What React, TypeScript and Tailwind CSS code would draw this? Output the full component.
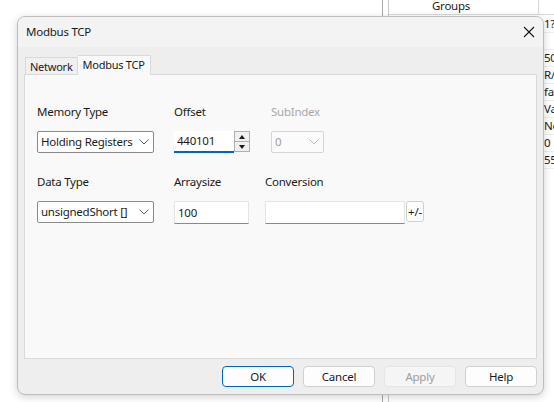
import React from "react";

const FONT = "font-['Segoe_UI','Noto_Sans','Open_Sans',sans-serif]";

function Chevron({ color = "#606060" }: { color?: string }) {
  return (
    <svg width="10" height="6" viewBox="0 0 10 6" fill="none" stroke={color} strokeWidth="1" className="shrink-0">
      <polyline points="0.5 0.5 5 5 9.5 0.5" />
    </svg>
  );
}

function Select({ value, width, disabled }: { value: string; width: string; disabled?: boolean }) {
  return (
    <div
      className={`${width} h-[22px] flex items-center justify-between pl-[3px] pr-[4px] border rounded-[2px] ${
        disabled ? "border-[#d5d5d5] bg-[#fbfbfb] text-[#a0a0a0]" : "border-[#8a8a8a] bg-white text-[#1a1a1a]"
      }`}
    >
      <span className="whitespace-nowrap">{value}</span>
      <Chevron color={disabled ? "#b8b8b8" : "#606060"} />
    </div>
  );
}

function Btn({ label, primary, disabled }: { label: string; primary?: boolean; disabled?: boolean }) {
  return (
    <div
      className={`w-[72px] h-[21px] flex items-center justify-center rounded-[4px] border ${
        primary
          ? "border-[#0067c0] bg-[#fdfdfd] text-[#1a1a1a]"
          : disabled
          ? "border-[#e5e5e5] bg-[#f5f5f5] text-[#9d9d9d]"
          : "border-[#d0d0d0] bg-[#fdfdfd] text-[#1a1a1a]"
      }`}
    >
      {label}
    </div>
  );
}

const STRIP = ["1?I", "", "50", "R/", "fal", "Va", "No", "0", "55"];

export default function App() {
  return (
    <div className={`${FONT} relative w-[554px] h-[402px] overflow-hidden bg-white text-[11.5px] tracking-[-0.25px]`}>
      {/* background window */}
      <div className="absolute left-[382px] top-0 h-full w-px bg-[#a8a8a8]" />
      <div className="absolute left-[388px] top-0 h-full w-px bg-[#c8c8c8]" />
      <div className="absolute left-[389px] top-0 right-0 h-[15px] border-b border-[#d8d8d8] flex">
        <div className="w-[150px] h-full border-r border-[#d8d8d8] pl-[43px] leading-[12px] text-[#1a1a1a]">Groups</div>
      </div>
      <div className="absolute left-[540px] top-[16px] right-0 flex flex-col text-[#1a1a1a]">
        {STRIP.map((t, i) => (
          <div key={i} className="h-[17px] leading-[16px] border-b border-[#ececec] pl-[4px] whitespace-nowrap">
            {t}
          </div>
        ))}
      </div>

      {/* dialog */}
      <div className="absolute left-[17px] top-[16px] w-[527px] h-[379px] rounded-[8px] border border-[#bdbdbd] bg-[#eeeeee] shadow-[0_2px_8px_rgba(0,0,0,0.18)] flex flex-col overflow-hidden">
        <div className="h-[30px] shrink-0 bg-[#f3f3f3] flex items-center justify-between pl-[8px] pr-[8px]">
          <span className="text-[#1a1a1a]">Modbus TCP</span>
          <svg width="12" height="12" viewBox="0 0 12 12" stroke="#1a1a1a" strokeWidth="1.1">
            <line x1="1" y1="1" x2="11" y2="11" />
            <line x1="11" y1="1" x2="1" y2="11" />
          </svg>
        </div>
        <div className="flex-1 flex flex-col px-[6px] pt-[7px]">
          {/* tabs */}
          <div className="flex items-end h-[20px] pl-[1px] text-[11px]">
            <div className="h-[17px] px-[4px] border border-b-0 border-[#d9d9d9] bg-[#f0f0f0] leading-[17px] text-[#1a1a1a]">
              Network
            </div>
            <div className="h-[20px] px-[5px] border border-b-0 border-l-0 border-[#d9d9d9] bg-[#f9f9f9] leading-[18px] text-[#1a1a1a] -mb-px relative z-10">
              Modbus TCP
            </div>
          </div>
          <div className="h-[285px] border border-[#d9d9d9] bg-[#f9f9f9] pl-[12px] pt-[30px]">
            <div className="flex">
              <div className="w-[137px] flex flex-col gap-[12px]">
                <span className="text-[#1a1a1a] leading-[14px]">Memory Type</span>
                <Select value="Holding Registers" width="w-[117px]" />
              </div>
              <div className="w-[97px] flex flex-col gap-[12px]">
                <span className="text-[#1a1a1a] leading-[14px]">Offset</span>
                <div className="flex">
                  <div className="w-[60px] h-[22px] bg-white border-b-2 border-[#0067c0] pl-[3px] leading-[20px] text-[#1a1a1a]">
                    440101
                  </div>
                  <div className="w-[16px] h-[21px] flex flex-col border border-[#b0b0b0] bg-[#f0f0f0]">
                    <div className="flex-1 flex items-center justify-center border-b border-[#b0b0b0]">
                      <svg width="6" height="4" viewBox="0 0 6 4"><polygon points="0,4 6,4 3,0" fill="#1a1a1a" /></svg>
                    </div>
                    <div className="flex-1 flex items-center justify-center">
                      <svg width="6" height="4" viewBox="0 0 6 4"><polygon points="0,0 6,0 3,4" fill="#1a1a1a" /></svg>
                    </div>
                  </div>
                </div>
              </div>
              <div className="flex flex-col gap-[12px]">
                <span className="text-[#a8a8a8] leading-[14px]">SubIndex</span>
                <Select value="0" width="w-[53px]" disabled />
              </div>
            </div>
            <div className="flex mt-[22px]">
              <div className="w-[137px] flex flex-col gap-[12px]">
                <span className="text-[#1a1a1a] leading-[14px]">Data Type</span>
                <Select value="unsignedShort []" width="w-[117px]" />
              </div>
              <div className="w-[91px] flex flex-col gap-[12px]">
                <span className="text-[#1a1a1a] leading-[14px]">Arraysize</span>
                <div className="w-[75px] h-[23px] bg-white border border-[#e5e5e5] border-b-[#8a8a8a] pl-[3px] leading-[21px] text-[#1a1a1a]">
                  100
                </div>
              </div>
              <div className="flex flex-col gap-[12px]">
                <span className="text-[#1a1a1a] leading-[14px]">Conversion</span>
                <div className="flex items-start">
                  <div className="w-[140px] h-[23px] bg-white border border-[#e5e5e5] border-b-[#8a8a8a]" />
                  <div className="w-[18px] h-[21px] ml-px bg-[#fdfdfd] border border-[#d0d0d0] rounded-[3px] flex items-center justify-center text-[#1a1a1a] leading-none">
                    +/-
                  </div>
                </div>
              </div>
            </div>
          </div>
          <div className="flex justify-end gap-[9px] mt-[7px]">
            <Btn label="OK" primary />
            <Btn label="Cancel" />
            <Btn label="Apply" disabled />
            <Btn label="Help" />
          </div>
        </div>
      </div>
    </div>
  );
}
